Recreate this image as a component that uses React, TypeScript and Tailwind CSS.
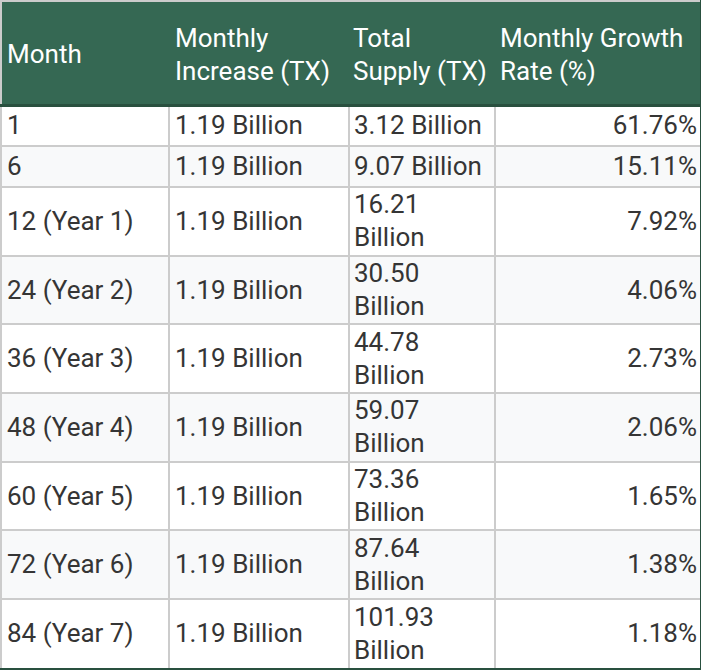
import React from 'react';

const rows = [
  { month: '1', inc: '1.19 Billion', total: '3.12 Billion', rate: '61.76%' },
  { month: '6', inc: '1.19 Billion', total: '9.07 Billion', rate: '15.11%' },
  { month: '12 (Year 1)', inc: '1.19 Billion', total: '16.21 Billion', rate: '7.92%' },
  { month: '24 (Year 2)', inc: '1.19 Billion', total: '30.50 Billion', rate: '4.06%' },
  { month: '36 (Year 3)', inc: '1.19 Billion', total: '44.78 Billion', rate: '2.73%' },
  { month: '48 (Year 4)', inc: '1.19 Billion', total: '59.07 Billion', rate: '2.06%' },
  { month: '60 (Year 5)', inc: '1.19 Billion', total: '73.36 Billion', rate: '1.65%' },
  { month: '72 (Year 6)', inc: '1.19 Billion', total: '87.64 Billion', rate: '1.38%' },
  { month: '84 (Year 7)', inc: '1.19 Billion', total: '101.93 Billion', rate: '1.18%' },
];

const App = () => {
  return (
    <div
      className="w-[703px] h-[671px] bg-white overflow-hidden"
      style={{ fontFamily: 'Roboto, "Noto Sans", sans-serif' }}
    >
      <div className="w-[701px] border-r-2 border-b-2 border-[#29503f]">
        <table className="table-fixed border-collapse w-[699px] text-[26px] leading-[33px] text-[#353535]">
          <colgroup>
            <col className="w-[168px]" />
            <col className="w-[180px]" />
            <col className="w-[146px]" />
            <col className="w-[205px]" />
          </colgroup>
          <thead>
            <tr className="h-[104px] bg-[#356853] text-white">
              <th className="border-t-2 border-l-2 border-b-[3px] border-t-[#cccccc] border-l-[#cccccc] border-b-[#29503f] font-normal text-left align-middle px-[5px] pt-[4px]">Month</th>
              <th className="border-t-2 border-b-[3px] border-t-[#cccccc] border-b-[#29503f] font-normal text-left align-middle px-[6px] pt-[4px]">Monthly Increase (TX)</th>
              <th className="border-t-2 border-b-[3px] border-t-[#cccccc] border-b-[#29503f] font-normal text-left align-middle px-[4px] pt-[4px]">Total Supply (TX)</th>
              <th className="border-t-2 border-b-[3px] border-t-[#cccccc] border-b-[#29503f] font-normal text-left align-middle px-[5px] pt-[4px]">Monthly Growth Rate (%)</th>
            </tr>
          </thead>
          <tbody>
            {rows.map((row, index) => {
              const last = index === rows.length - 1;
              return (
                <tr
                  key={index}
                  className={
                    (index < 2 ? 'h-[41px] ' : 'h-[68.7px] ') +
                    (index % 2 === 1 ? 'bg-[#f8f9fa]' : 'bg-white')
                  }
                >
                  <td className={'border-2 border-[#cccccc] px-[5px] align-middle' + (last ? ' border-b-0' : '')}>{row.month}</td>
                  <td className={'border-2 border-[#cccccc] px-[5px] align-middle' + (last ? ' border-b-0' : '')}>{row.inc}</td>
                  <td className={'border-2 border-[#cccccc] px-[4px] align-middle' + (last ? ' border-b-0' : '')}>{row.total}</td>
                  <td className={'border-2 border-r-0 border-[#cccccc] px-[3px] text-right align-middle' + (last ? ' border-b-0' : '')}>{row.rate}</td>
                </tr>
              );
            })}
          </tbody>
        </table>
      </div>
    </div>
  );
};

export default App;
